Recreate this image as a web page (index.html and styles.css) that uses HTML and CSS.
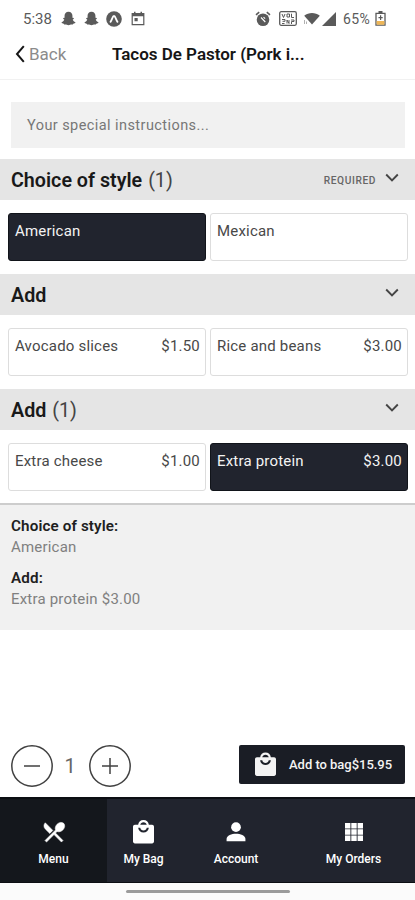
FILE: index.html
```html
<!DOCTYPE html>
<html lang="en">
<head>
<meta charset="utf-8">
<title>Tacos De Pastor</title>
<link rel="stylesheet" href="styles.css">
</head>
<body>
<svg class="defs" width="0" height="0">
  <symbol id="bag" viewBox="0 0 22 25"><path fill-rule="evenodd" d="M2 5.5H5.4C5.8 2.4 8 .5 11 .5s5.2 1.9 5.6 5H20c1.1 0 2 .9 2 2V23c0 1.100-.9 2-2 2H2c-1.100 0-2-.9-2-2V7.500c0-1.100.9-2 2-2ZM7.600 5.500h6.800C14 3.700 12.800 2.700 11 2.700S8 3.700 7.600 5.500ZM5.400 8.500c.4 3.200 2.600 5.100 5.600 5.100s5.200-1.900 5.600-5.100h-2.200c-.4 1.900-1.600 2.900-3.400 2.900s-3-1-3.400-2.900Z"/></symbol>
  <symbol id="ghost" viewBox="0 0 16 16"><path d="M8 .8c2.700 0 4.200 1.900 4.200 4.200v2.200l1.500.2-.2 1-1 .6c.6 1.500 1.400 2.300 2.800 2.900v1l-2.200.6-.5 1-2-.1L8 15.300l-2.600-.9-2 .1-.5-1-2.200-.6v-1c1.400-.6 2.200-1.400 2.800-2.900l-1-.6-.2-1 1.500-.2V5C3.800 2.700 5.300.8 8 .8Z"/></symbol>
  <symbol id="chevron" viewBox="0 0 14 9"><path d="M1.200 1.500 7 7.300l5.800-5.800" fill="none" stroke="currentColor" stroke-width="1.900"/></symbol>
</svg>
<div class="status">
  <span class="time">5:38</span>
  <svg class="ghost"><use href="#ghost"/></svg>
  <svg class="ghost second"><use href="#ghost"/></svg>
  <svg class="app" viewBox="0 0 16 16"><circle cx="8" cy="8" r="7.800"/><path d="M4.500 10.800C6 9 6.500 5 8 5s2 4 3.500 5.800" fill="none" stroke="#fff" stroke-width="1.800" stroke-linecap="round"/></svg>
  <svg class="calendar" viewBox="0 0 14 15"><path d="M1.200 2.700h11.600v11H1.200Z" fill="none" stroke="currentColor" stroke-width="1.200"/><path d="M1 2.500h12v2.800H1ZM3 .8h1.500v2H3Zm6.500 0H11v2H9.500ZM3.500 7h3.200v3.200H3.500Z"/></svg>
  <span class="spacer"></span>
  <svg class="alarm" viewBox="0 0 16 16"><path d="m1 3.800 3.200-2.600M15 3.800l-3.200-2.600" stroke="currentColor" stroke-width="1.600"/><circle cx="8" cy="8.800" r="6.300"/><path d="M6 6.500 10.300 11M8.500 6.200l1.600 1.500" stroke="#fff" stroke-width="1.100"/></svg>
  <svg class="volte" viewBox="0 0 18 15"><rect x=".7" y=".7" width="16.600" height="13.600" rx="1.500" fill="none" stroke="currentColor" stroke-width="1.300"/><path d="m3 3 1.500 3.500L6 3m2 0h2.500v3H8Zm4.500-.3v3.800h2.500M3 8.500h3v1.800H3.500M8 12.500V9l2 3.500V9m2 0h3v1.500h-2.500V13M3 12.500h2.500" fill="none" stroke="currentColor"/></svg>
  <svg class="wifi" viewBox="0 0 16 13"><path d="M.2 3.700C4.700.1 11.300.1 15.800 3.700L8 12.600Z"/><path d="M.5 8v4M2.500 9.500v2.500" stroke="currentColor" stroke-width=".8" opacity=".6"/></svg>
  <svg class="signal" viewBox="0 0 14 14"><path d="M14 0v14H0Z"/></svg>
  <span class="percent">65%</span>
  <svg class="battery" viewBox="0 0 11 15"><path d="M3.500 0h4v2h-4Z"/><path d="M1 2.400h9v11.800H1Z" fill="#fff" stroke="currentColor" stroke-width="1.300"/><path d="M1.600 10h7.800v3.700H1.600Z" fill="#eeb657"/><path d="M5 4.300h1.200V6h1.500v1.200H6.200v1.700H5V7.200H3.500V6H5Z"/></svg>
</div>
<header class="header">
  <a class="back"><svg viewBox="0 0 10 18"><path d="M8.800 1.200 2 9l6.800 7.800" fill="none" stroke="#161616" stroke-width="2"/></svg><span>Back</span></a>
  <h1>Tacos De Pastor (Pork i...</h1>
</header>
<main class="main">
  <div class="instructions">Your special instructions...</div>
  <section class="group">
    <h2><b>Choice of style</b><span class="count">(1)</span><small>REQUIRED</small><svg><use href="#chevron"/></svg></h2>
    <div class="options">
      <div class="option selected"><span>American</span></div>
      <div class="option"><span>Mexican</span></div>
    </div>
  </section>
  <section class="group">
    <h2><b>Add</b><svg class="end"><use href="#chevron"/></svg></h2>
    <div class="options">
      <div class="option"><span>Avocado slices</span><span>$1.50</span></div>
      <div class="option"><span>Rice and beans</span><span>$3.00</span></div>
    </div>
  </section>
  <section class="group">
    <h2><b>Add</b><span class="count">(1)</span><svg class="end"><use href="#chevron"/></svg></h2>
    <div class="options">
      <div class="option"><span>Extra cheese</span><span>$1.00</span></div>
      <div class="option selected"><span>Extra protein</span><span>$3.00</span></div>
    </div>
  </section>
  <section class="summary">
    <h3>Choice of style:</h3>
    <p>American</p>
    <h3>Add:</h3>
    <p>Extra protein $3.00</p>
  </section>
</main>
<div class="purchase">
  <svg class="round" viewBox="0 0 42 42"><circle cx="21" cy="21" r="20.200"/><path d="M13 21h16"/></svg>
  <span class="quantity">1</span>
  <svg class="round" viewBox="0 0 42 42"><circle cx="21" cy="21" r="20.200"/><path d="M13 21h16M21 13v16"/></svg>
  <div class="add"><svg><use href="#bag"/></svg><span>Add to bag$15.95</span></div>
</div>
<nav class="nav">
  <a class="active"><svg viewBox="0 0 24 24"><path d="M8.100 13.340l2.830-2.830L3.910 3.500c-1.560 1.560-1.560 4.090 0 5.660l4.190 4.180zm6.780-1.810c1.530.71 3.680.21 5.270-1.380 1.910-1.910 2.280-4.650.81-6.120-1.460-1.460-4.200-1.100-6.120.81-1.590 1.590-2.090 3.740-1.380 5.270L3.700 19.870l1.410 1.410L12 14.410l6.880 6.880 1.410-1.410L13.410 13l1.470-1.470z" stroke="currentColor" stroke-width=".5"/></svg><span>Menu</span></a>
  <a><svg class="bag"><use href="#bag"/></svg><span>My Bag</span></a>
  <a><svg viewBox="0 0 24 24"><circle cx="12" cy="7.500" r="4.500"/><path d="M3.300 20.500v-2c0-3.200 4.700-4.900 8.700-4.900s8.700 1.700 8.700 4.900v2Z"/></svg><span>Account</span></a>
  <a><svg viewBox="0 0 24 24"><path d="M3.700 3.700h5v5h-5Zm5.800 0h5v5h-5Zm5.800 0h5v5h-5ZM3.700 9.500h5v5h-5Zm5.800 0h5v5h-5Zm5.800 0h5v5h-5ZM3.700 15.300h5v5h-5Zm5.800 0h5v5h-5Zm5.800 0h5v5h-5Z"/></svg><span>My Orders</span></a>
</nav>
<div class="home"><i></i></div>
</body>
</html>
```
FILE: styles.css
```css
* { box-sizing: border-box; }
body { margin: 0; width: 415px; height: 900px; overflow: hidden; display: flex; flex-direction: column; background: #fff; font-family: Roboto, "Liberation Sans", sans-serif; color: #191919; }
svg { display: block; flex: none; fill: currentColor; }
.defs { position: absolute; }
h1, h2, h3, p { margin: 0; white-space: nowrap; }

.status { height: 36px; flex: none; display: flex; align-items: center; padding: 1px 29px 0 23px; color: #5a5a5a; }
.time { font-size: 15px; width: 38px; }
.ghost { width: 15px; height: 15px; }
.second { margin: 0 7px 0 8px; }
.app { width: 16px; height: 16px; }
.calendar { width: 14px; height: 15px; margin-left: 9px; }
.spacer { flex: 1; }
.alarm { width: 16px; height: 16px; }
.volte { width: 18px; height: 15px; margin-left: 8px; }
.wifi { width: 16px; height: 13px; margin-left: 7px; }
.signal { width: 14px; height: 14px; margin-left: 2px; }
.percent { font-size: 14px; margin-left: 7px; width: 32px; white-space: nowrap; letter-spacing: .4px; }
.battery { width: 11px; height: 15px; }

.header { height: 44px; flex: none; display: flex; align-items: center; padding: 0 15px 8px; border-bottom: 1px solid #f1f1f1; }
.back { display: flex; align-items: center; width: 97px; gap: 4px; font-size: 17px; color: #8b8b8b; }
.back svg { width: 10px; height: 18px; }
h1 { font-size: 17px; font-weight: 600; color: #161616; letter-spacing: -.02px; }

.main { flex: 1; padding-top: 22px; }
.instructions { height: 46px; margin: 0 10px 11px 11px; padding-left: 16px; display: flex; align-items: center; background: #f1f1f1; color: #777; font-size: 14.500px; letter-spacing: .43px; }
.group h2 { height: 41px; display: flex; align-items: center; padding: 2px 16px 0 11px; background: #e5e5e5; font-size: 19.700px; font-weight: 400; }
h2 b { font-weight: 600; }
.count { color: #444; margin-left: 6px; }
h2 small { margin-left: auto; margin-right: 9px; font-size: 10.200px; font-weight: 500; color: #666; letter-spacing: .6px; }
h2 svg { width: 14px; height: 9px; color: #444; margin-bottom: 6px; }
h2 .end { margin-left: auto; }
.options { height: 74px; padding: 13px 7px 12px 8px; display: grid; grid-template-columns: 198px 198px; gap: 4px; }
.option { height: 48px; display: flex; justify-content: space-between; padding: 7px 5px 0 6px; border: 1px solid #ddd; border-radius: 3px; font-size: 15px; line-height: 20px; color: #484848; letter-spacing: .2px; white-space: nowrap; }
.selected { background: #21242e; border-color: #11141a; color: #f3f3f3; }
.summary { height: 127px; margin-top: -1px; padding: 11px 11px; border-top: 2px solid #cdcdcd; background: #f1f1f1; font-size: 15px; line-height: 21px; }
h3 { font-size: 15.200px; font-weight: 600; color: #202020; letter-spacing: .13px; }
.summary p { color: #808080; letter-spacing: .2px; margin-bottom: 10px; }

.purchase { height: 67px; flex: none; display: flex; align-items: center; padding: 4px 10px 0 11px; }
.round { width: 42px; height: 42px; fill: none; stroke: #414141; stroke-width: 1.500; }
.quantity { width: 36px; padding-right: 2px; text-align: center; font-size: 20px; color: #666; }
.add { width: 166px; height: 39px; margin: 0 0 3px auto; padding-left: 16px; display: flex; align-items: center; gap: 13px; border-radius: 2px; background: #1a1d25; color: #f3f3f3; font-size: 13px; font-weight: 500; letter-spacing: -.03px; white-space: nowrap; }
.add svg { width: 21px; height: 24px; }

.nav { height: 86px; flex: none; display: grid; grid-template-columns: 107px 73px 112px 123px; background: #21242e; border-top: 2px solid #0c0e13; border-bottom: 1px solid #0c0e13; color: #fff; }
.nav a { display: flex; flex-direction: column; align-items: center; padding-top: 20px; font-size: 12px; font-weight: 500; line-height: 16px; white-space: nowrap; }
.nav a svg { width: 26px; height: 26px; margin-bottom: 6px; }
.nav a .bag { width: 21px; height: 25px; margin-bottom: 7px; }
.nav .active { background: #14171c; }
.home { height: 17px; flex: none; display: flex; justify-content: center; padding-top: 7px; background: #fbfbfb; }
.home i { width: 164px; height: 3px; border-radius: 2px; background: #9b9b9b; }
```
